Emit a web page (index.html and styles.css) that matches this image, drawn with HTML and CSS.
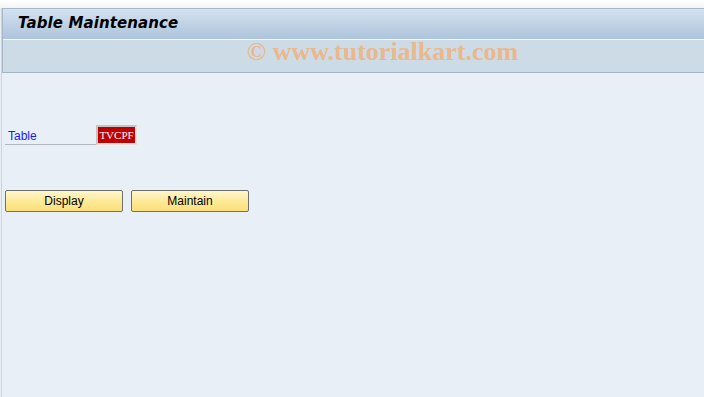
FILE: index.html
```html
<!DOCTYPE html>
<html lang="en">
<head>
  <meta charset="UTF-8" />
  <title>Table Maintenance</title>
  <link rel="stylesheet" href="styles.css">
</head>
<body>

<div class="top-strip"></div>

<div class="frame">
  <!-- En-tête -->
  <div class="header">
    <div class="title-bar">
      <h1>Table Maintenance</h1>
    </div>
    <div class="toolbar">
      <span class="watermark">© www.tutorialkart.com</span>
    </div>
  </div>

  <!-- Contenu -->
  <div class="content">
    <div class="field-row">
      <label class="field-label" for="table">Table</label>
      <span class="field-value" id="table">TVCPF</span>
    </div>

    <div class="actions">
      <button>Display</button>
      <button>Maintain</button>
    </div>
  </div>
</div>

</body>
</html>
```

FILE: styles.css
```css
body {
  margin: 0;
  background: #e8eff6;
  font-family: "Liberation Sans", Arial, sans-serif;
  font-size: 12px;
  color: #000;
  height: 397px;
  overflow: hidden;
}
.top-strip {
  height: 8px;
  background: linear-gradient(#ffffff, #f2f5f8);
}
.frame {
  margin-left: 1px;
  border-left: 1px solid #c9d3dc;
  height: 389px;
}
.header {
  border-top: 1px solid #a9b7c6;
  border-bottom: 1px solid #a5b4c4;
  border-left: 1px solid #a9b7c6;
}
.title-bar {
  height: 30px;
  background: linear-gradient(#d3e2f0, #adc4db);
  border-bottom: 1px solid #f4f8fb;
  display: flex;
  align-items: center;
}
h1 {
  margin: -2px 0 0 15px;
  font-family: "DejaVu Sans", Verdana, sans-serif;
  font-size: 15px;
  font-weight: bold;
  font-style: italic;
  letter-spacing: 0.1px;
}
.toolbar {
  height: 32px;
  background: #cddbe6;
  display: flex;
  align-items: center;
  justify-content: center;
}
.watermark {
  font-family: "Liberation Serif", "Times New Roman", serif;
  font-weight: bold;
  font-size: 26px;
  color: #e9b88c;
  margin-left: 58px;
  margin-top: -8px;
}
.content {
  padding: 52px 0 0 3px;
}
.field-row {
  display: flex;
  align-items: flex-end;
}
.field-label {
  width: 88px;
  padding: 0 0 1px 3px;
  color: #1a1aff;
  border-bottom: 1px solid #b2b7bd;
}
.field-value {
  width: 37px;
  height: 16px;
  background: #c00000;
  color: #fff;
  font-family: "Liberation Serif", "Times New Roman", serif;
  font-size: 11px;
  line-height: 16px;
  text-align: center;
  white-space: nowrap;
  overflow: hidden;
  border: 2px solid #c4c4c4;
  border-right-color: #e0e0e0;
  border-bottom-color: #e0e0e0;
}
.actions {
  display: flex;
  gap: 8px;
  margin-top: 45px;
}
button {
  width: 118px;
  height: 22px;
  padding: 0;
  font-family: "Liberation Sans", Arial, sans-serif;
  font-size: 12px;
  color: #000;
  background: linear-gradient(#fff6cc, #fde891 60%, #fbe07a);
  border: 1px solid #6f6f6f;
  border-radius: 2px;
  cursor: pointer;
}
```
